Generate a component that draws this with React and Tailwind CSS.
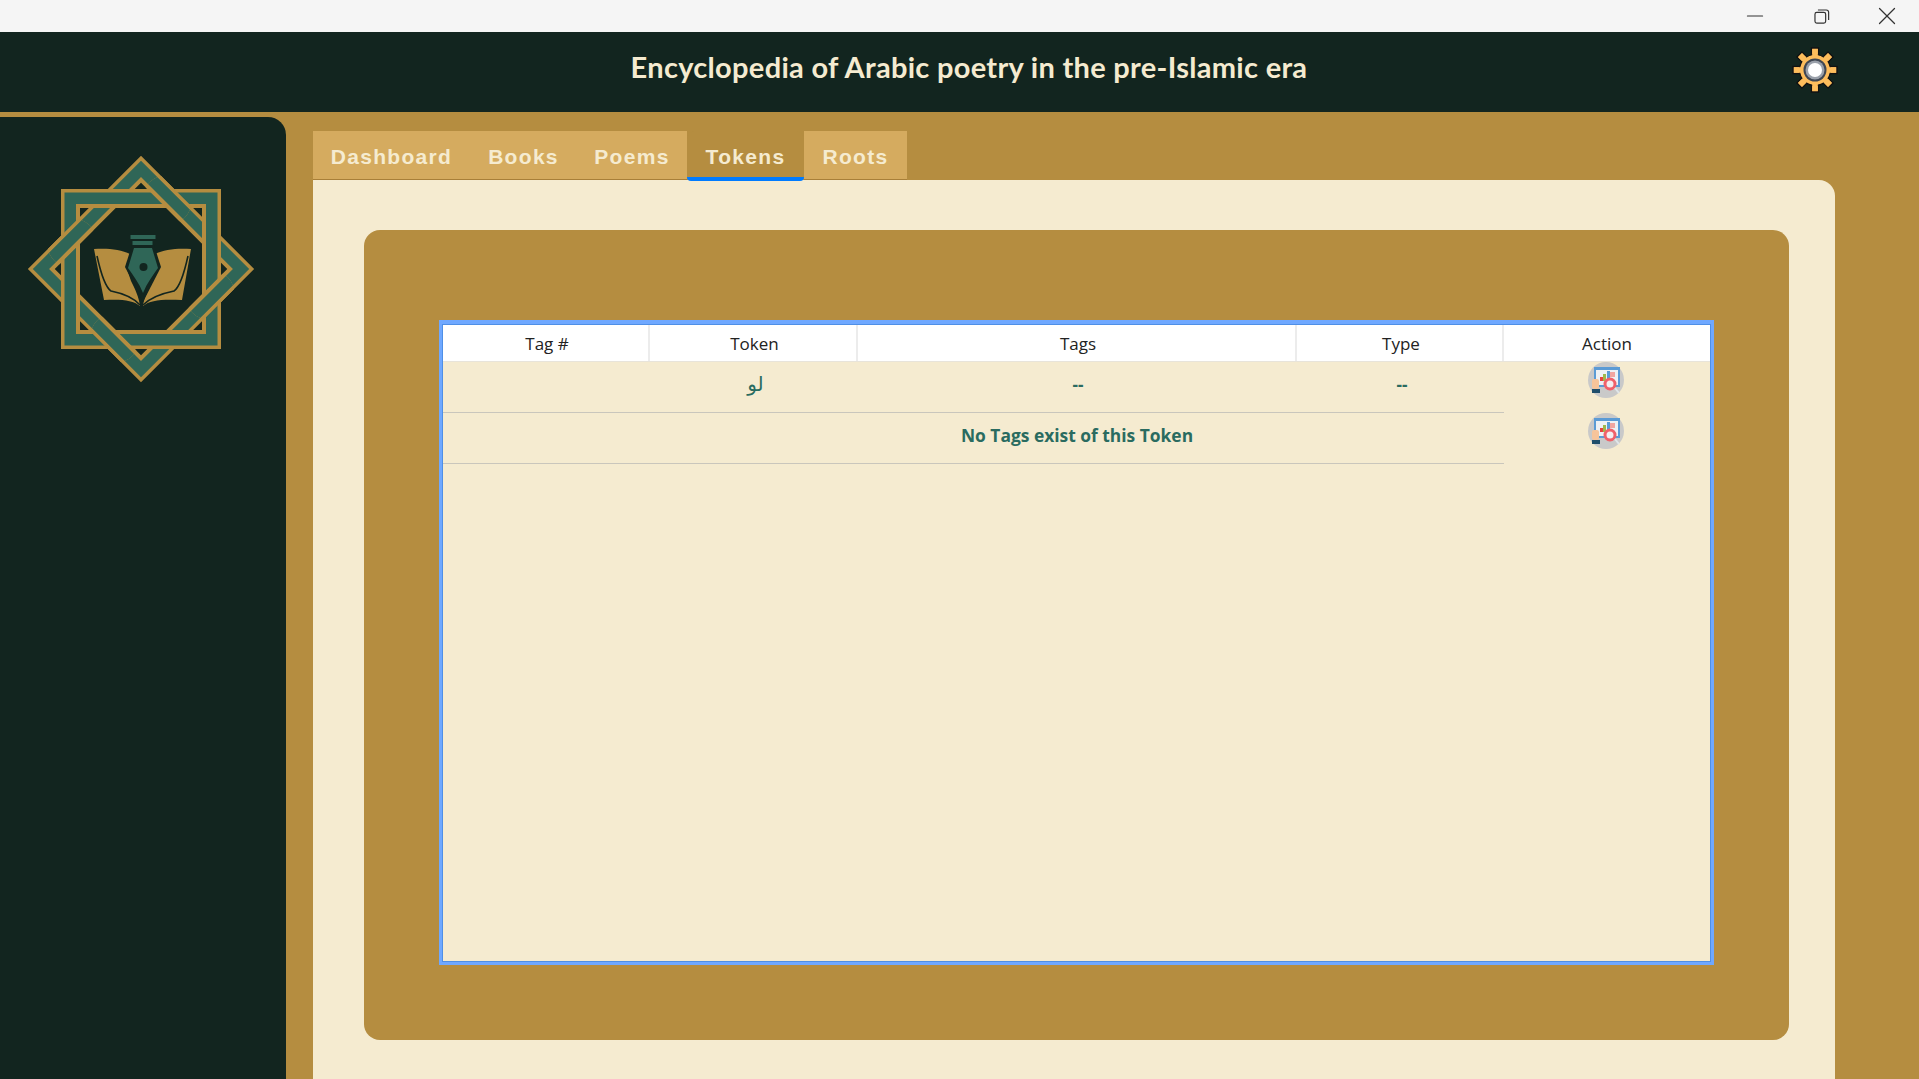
import { Minus, X } from 'lucide-react'

const tabs = [
  { name: 'Dashboard', width: 'w-[157px]' },
  { name: 'Books', width: 'w-[107px]' },
  { name: 'Poems', width: 'w-[110px]' },
  { name: 'Tokens', width: 'w-[117px]', active: true },
  { name: 'Roots', width: 'w-[103px]' },
]

// one band of the star, drawn as nested squares around the centre
function Band({ rotate = 0 }) {
  return (
    <g transform={`rotate(${rotate})`}>
      <path fillRule="evenodd" fill="#b58d40" d="M-80 -80H80V80H-80ZM-61 -61V61H61V-61Z" />
      <path fillRule="evenodd" fill="#2f6657" d="M-76.5 -76.5H76.5V76.5H-76.5ZM-65 -65V65H65V-65Z" />
    </g>
  )
}

function Logo() {
  return (
    <svg width="240" height="240" viewBox="-120 -120 240 240">
      <defs>
        <clipPath id="over">
          <circle cx="26" cy="-69" r="25" />
          <circle cx="69" cy="26" r="25" />
          <circle cx="-26" cy="69" r="25" />
          <circle cx="-69" cy="-26" r="25" />
        </clipPath>
      </defs>
      <Band rotate={45} />
      <Band />
      <g clipPath="url(#over)">
        <Band rotate={45} />
      </g>
      {/* open book */}
      <path fill="#b58d40" d="M-47 -20C-35 -21 -20 -20 -11 -15L-15 -3L-10 12C-6 20 -2 28 -1 37C-8 31 -20 30 -37 31Z" />
      <path fill="#b58d40" d="M50 -20C38 -21 23 -20 14 -15L17 -3L12 12C8 20 3 28 2 37C9 31 21 30 41 31Z" />
      <path fill="none" stroke="#12251f" strokeWidth="1.6" d="M-44 -13C-40 5 -36 18 -30 22C-20 24 -8 28 -1 36" />
      <path fill="none" stroke="#12251f" strokeWidth="1.6" d="M47 -13C43 5 39 18 33 22C23 24 10 28 2 36" />
      {/* pen nib */}
      <g transform="translate(1 0)">
        <path fill="#12251f" d="M-10 -24H12L19 -2L1 33L-17 -2Z" />
        <path fill="#2f6657" d="M-9 -34H16V-30H-9ZM-7 -28H13V-24H-7Z" transform="translate(-2.5 0)" />
        <path fill="#2f6657" d="M-8 -21H10L16 -1C11 6 5 14 1 24C-3 14 -9 6 -14 -1Z" />
        <circle cx="1.5" cy="-2" r="4" fill="#12251f" />
      </g>
    </svg>
  )
}

function Gear() {
  const teeth = [0, 45, 90, 135, 180, 225, 270, 315]
  return (
    <svg width="46" height="46" viewBox="-23 -23 46 46">
      {teeth.map((a) => (
        <rect key={a} x="-3.5" y="-22" width="7" height="12" fill="#fdbd5c" stroke="#111" strokeWidth="1.4" transform={`rotate(${a})`} />
      ))}
      <circle r="15.5" fill="#fdbd5c" stroke="#111" strokeWidth="1.2" />
      {teeth.map((a) => (
        <rect key={a} x="-2.8" y="-21" width="5.6" height="10" fill="#fdbd5c" transform={`rotate(${a})`} />
      ))}
      <circle r="11.5" fill="#3f4652" />
      <circle r="9.5" fill="#9aa0aa" />
      <circle r="7" fill="#fff" />
    </svg>
  )
}

function ActionIcon() {
  return (
    <svg width="36" height="36" viewBox="0 0 36 36" className="block">
      <circle cx="18" cy="18" r="18" fill="#c9c9c9" />
      <rect x="6" y="5" width="26" height="20" fill="#5b9bd5" />
      <rect x="8" y="8" width="22" height="15" fill="#eef1f4" />
      <rect x="12" y="15" width="3" height="4" fill="#e8433e" />
      <rect x="15" y="12" width="3" height="7" fill="#9fb84a" />
      <rect x="19" y="9" width="3" height="10" fill="#5b9bd5" />
      <rect x="22" y="10" width="5" height="5" fill="#f2a6a0" />
      <rect x="4" y="17" width="7" height="10" rx="2" fill="#f7c49a" />
      <rect x="4" y="27" width="8" height="4" fill="#1f4e6b" />
      <circle cx="22" cy="22" r="5" fill="#f4eef0" stroke="#f0616a" strokeWidth="3" />
      <path d="M27 26L31 31" stroke="#dfe6ea" strokeWidth="2" />
    </svg>
  )
}

export default function App() {
  return (
    <div className="w-[1919px] h-[1079px] overflow-hidden flex flex-col bg-[#b58d40] font-['Open_Sans',sans-serif]">
      {/* window bar */}
      <div className="h-8 shrink-0 bg-[#f5f5f5] flex justify-end items-center text-[#333]">
        <div className="w-[66px] flex justify-center"><Minus size={26} strokeWidth={1} /></div>
        <div className="w-[66px] flex justify-center">
          <svg width="19" height="19" viewBox="0 0 16 16" fill="none" stroke="#333" strokeWidth="1">
            <rect x="2.5" y="4.5" width="9" height="9" rx="1.5" />
            <path d="M5 2.5H12A2 2 0 0 1 14 4.5V11" />
          </svg>
        </div>
        <div className="w-[65px] flex justify-center"><X size={30} strokeWidth={1} /></div>
      </div>

      {/* title */}
      <header className="h-20 shrink-0 bg-[#12251f] relative flex items-center justify-center">
        <h1 className="font-['Lato',sans-serif] font-bold text-[29px] tracking-[0.3px] text-[#f5ebd0] ml-[19px] mb-[10px]">
          Encyclopedia of Arabic poetry in the pre-Islamic era
        </h1>
        <div className="absolute left-[1792px] top-[15px]"><Gear /></div>
      </header>

      <div className="flex flex-1 min-h-0 pt-[5px]">
        <aside className="w-[286px] shrink-0 bg-[#12251f] rounded-tr-[18px] flex justify-center pt-[32px]">
          <div className="ml-[-4px]"><Logo /></div>
        </aside>

        <main className="flex-1 flex flex-col pl-[27px] pr-[84px] pt-[14px] min-w-0">
          <nav className="flex h-[49px] shrink-0 font-['Liberation_Sans',sans-serif] font-bold text-[21px] tracking-[1.3px]">
            {tabs.map((t) => (
              <div
                key={t.name}
                className={
                  t.width + (t.active
                    ? ' pt-[5px] flex items-center justify-center rounded-t-lg bg-[#b58d40] text-[#f5ebd0] border-b-[4px] border-[#007bff] rounded-b-sm h-[50px] relative z-10'
                    : ' pt-[3px] flex items-center justify-center bg-[#d5ab5f] text-[#f5ebd0] border-b border-[#a87f38]')
                }
              >
                {t.name}
              </div>
            ))}
          </nav>

          <section className="flex-1 bg-[#f5ebd0] rounded-tr-2xl pt-[50px] pl-[51px] pr-[46px]">
            <div className="h-[810px] bg-[#b58d40] rounded-2xl pt-[90px] px-[75px]">
              <div className="h-[645px] border-[3px] border-t-4 border-[#6fa8ff]">
                <div className="h-full bg-[#f5ebd0] border border-[#4f8fe6] flex flex-col text-[17px]">
                  <div className="grid grid-cols-[207px_208px_439px_207px_1fr] h-[37px] bg-white text-[#222] border-b border-[#e8e4da] shrink-0">
                    {['Tag #', 'Token', 'Tags', 'Type', 'Action'].map((h, i) => (
                      <div key={h} className={i < 4 ? 'flex items-center justify-center pl-[3px] pt-[2px] border-r-2 border-[#ececec]' : 'flex items-center justify-center pt-[2px]'}>
                        {h}
                      </div>
                    ))}
                  </div>

                  <div className="flex">
                    <div className="w-[1061px] shrink-0 text-[#2a6b60]">
                      <div className="grid grid-cols-[207px_208px_439px_207px] h-[51px] items-center text-center border-b border-[#c9c6bc] pb-[4px]">
                        <div />
                        <div className="text-[20px] pl-[3px] pb-[2px] font-['DejaVu_Sans',sans-serif]">لو</div>
                        <div className="pl-[1px] font-bold">--</div>
                        <div className="pl-[3px] font-bold">--</div>
                      </div>
                      <div className="grid grid-cols-[207px_208px_439px_207px] h-[51px] items-center text-center border-b border-[#c9c6bc] pb-[5px]">
                        <div className="col-start-3 whitespace-nowrap font-bold text-[17.4px] mr-[1px]">No Tags exist of this Token</div>
                      </div>
                    </div>
                    <div className="flex-1 flex flex-col items-center pr-[2px]">
                      <div className="h-[51px]"><ActionIcon /></div>
                      <div className="h-[51px]"><ActionIcon /></div>
                    </div>
                  </div>
                </div>
              </div>
            </div>
          </section>
        </main>
      </div>
    </div>
  )
}
